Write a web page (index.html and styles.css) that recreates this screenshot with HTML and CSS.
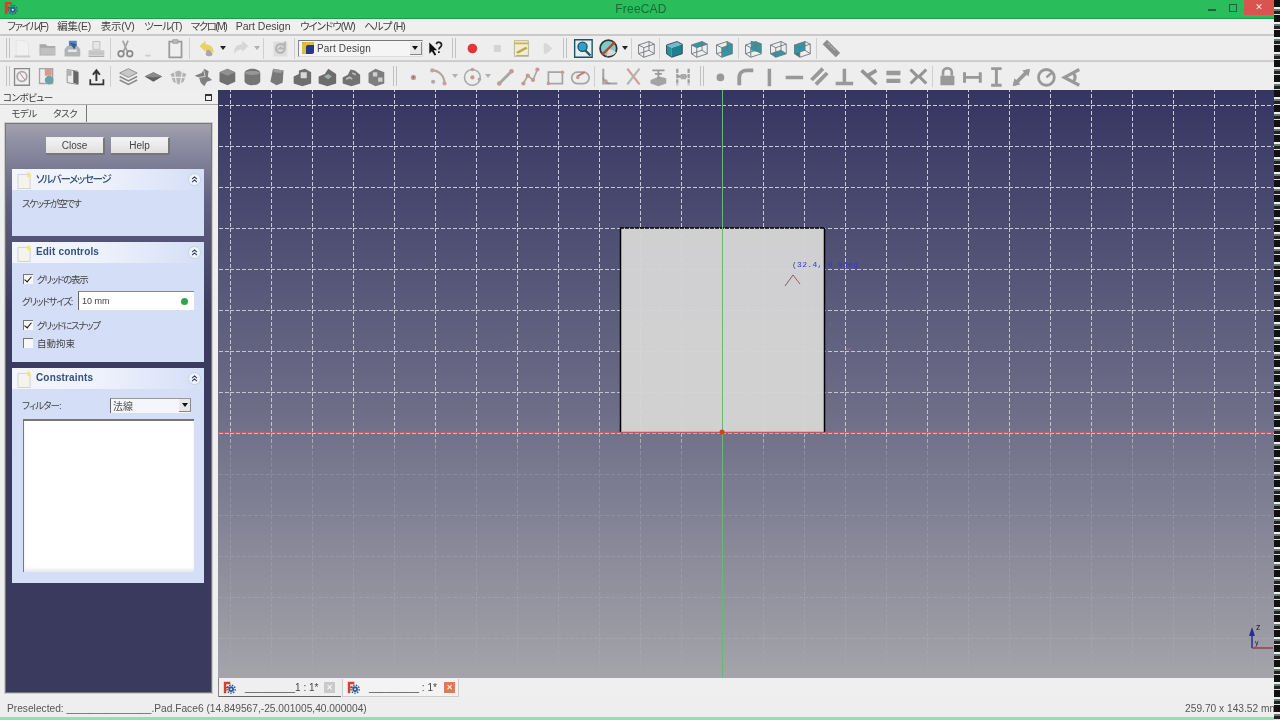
FILE: index.html
```html
<!DOCTYPE html>
<html lang="ja">
<head>
<meta charset="utf-8">
<title>FreeCAD</title>
<link rel="stylesheet" href="styles.css">
</head>
<body>
<svg class="defs" width="0" height="0">
  <defs>
    <symbol id="new" viewBox="0 0 24 24"><path d="M5 3h10l4 4v15H5z" fill="#f1f1f1" stroke="#e2e2e2"/><path d="M3 21h18" stroke="#ccc" stroke-width="2"/></symbol>
    <symbol id="open" viewBox="0 0 24 24"><path d="M3 7h7l2 2h9v11H3z" fill="#a8a8a8"/><path d="M4 11h17v8H4z" fill="#c0c0c0"/></symbol>
    <symbol id="save" viewBox="0 0 24 24"><path d="M8 3h9v9H8z" fill="#5a86b8"/><path d="M3 13l3-4h12l3 4v8H3z" fill="#b3b3b3"/><path d="M7 13h10v3H7z" fill="#e8e8e8"/><path d="M9 5l5 8 3-6z" fill="#2f5f96"/></symbol>
    <symbol id="print" viewBox="0 0 24 24"><path d="M8 4h8v9H8z" fill="#e6e6e6" stroke="#bbb"/><path d="M3 14h18v6H3z" fill="#c6c6c6"/><path d="M3 21h18" stroke="#999"/></symbol>
    <symbol id="cut" viewBox="0 0 24 24"><path d="M9 3l5 12M15 3l-5 12" stroke="#a5a5a5" stroke-width="2" fill="none"/><circle cx="7" cy="18" r="3.2" fill="none" stroke="#8a8a8a" stroke-width="2"/><circle cx="17" cy="18" r="3.2" fill="none" stroke="#8a8a8a" stroke-width="2"/></symbol>
    <symbol id="copy" viewBox="0 0 24 24"><path d="M6 15h8v6H6z" fill="#ececec"/><path d="M6 20h6" stroke="#ccc" stroke-width="2"/></symbol>
    <symbol id="paste" viewBox="0 0 24 24"><path d="M5 4h14v18H5z" fill="#eee" stroke="#9a9a9a" stroke-width="2"/><path d="M9 2h6v4H9z" fill="#bbb" stroke="#999"/></symbol>
    <symbol id="undo" viewBox="0 0 24 24"><path d="M3 9l7-6v4c6 0 10 4 9 11-2-4-5-5-9-5v3z" fill="#ecd060"/><path d="M11 13c4 0 6 2 7 6-3 3-6 2-8 0z" fill="#a8a8a8"/></symbol>
    <symbol id="redo" viewBox="0 0 24 24"><path d="M21 9l-7-6v4C8 7 4 11 5 18c2-4 5-5 9-5v3z" fill="#d6d6d6"/></symbol>
    <symbol id="refresh" viewBox="0 0 24 24"><path d="M4 4h16v17H4z" fill="#dedede"/><path d="M17 12a5 5 0 1 1-2-4l2-2v6h-6l2-2" fill="none" stroke="#b5b5b5" stroke-width="2.4"/></symbol>
    <symbol id="help" viewBox="0 0 24 24"><path d="M5 5v13l3-3 3 5 2-1-3-5h4z" fill="#111"/><path d="M13 7c1-3 6-3 6 1 0 3-3 2-3 5M16 15v2" fill="none" stroke="#222" stroke-width="2"/></symbol>
    <symbol id="rec" viewBox="0 0 24 24"><circle cx="12" cy="12" r="5.5" fill="#e5343a"/></symbol>
    <symbol id="stop" viewBox="0 0 24 24"><path d="M8 8h8v8H8z" fill="#d4d4d4"/></symbol>
    <symbol id="macro" viewBox="0 0 24 24"><path d="M4 3h16v18H4z" fill="#f1ecd2" stroke="#b5b08e"/><path d="M4 6h16" stroke="#c7b64d" stroke-width="2"/><path d="M6 16l11-6 2 2-11 6z" fill="#b9a94a"/><path d="M6 20h14" stroke="#a5a5a5"/></symbol>
    <symbol id="play" viewBox="0 0 24 24"><path d="M9 6v12h3l7-6-7-6z" fill="#d8d8d8"/></symbol>
    <symbol id="fit" viewBox="0 0 24 24"><path d="M2 2h20v20H2z" fill="#e4eef0" stroke="#1d5260" stroke-width="1.6"/><circle cx="11" cy="10" r="5.2" fill="#2f9fcb" stroke="#1d5260" stroke-width="1.5"/><path d="M14 14l6 6" stroke="#1d5260" stroke-width="2.6"/></symbol>
    <symbol id="draw" viewBox="0 0 24 24"><circle cx="12" cy="12" r="9.5" fill="#79cfc5" stroke="#333" stroke-width="2"/><path d="M12 12l9 4-3 3-8 2z" fill="#d9d9d9"/><path d="M5 19L19 5" stroke="#d8342d" stroke-width="2.6"/></symbol>
    <symbol id="cube" viewBox="0 0 24 24"><path d="M3 8l12-4 6 3v11l-12 4-6-4z M3 8l6 3v11 M9 11l12-4 M3 18l12-4V4 M15 14l6 4" fill="none" stroke="#6c7579" stroke-width="1"/></symbol>
    <symbol id="c-front" viewBox="0 0 24 24"><path d="M3 8l6 3v11l-6-4z" fill="#2a8f9f"/><path d="M9 11l12-4v11l-12 4z" fill="#1f7f90"/><path d="M3 8l12-4 6 3-12 4z" fill="#6fbcc8"/><path d="M3 8l12-4 6 3v11l-12 4-6-4z" fill="none" stroke="#345" stroke-width="1"/></symbol>
    <symbol id="c-top" viewBox="0 0 24 24"><path d="M3 8l12-4 6 3-12 4z" fill="#2f98a8"/><use href="#cube"/></symbol>
    <symbol id="c-right" viewBox="0 0 24 24"><path d="M15 4l6 3v11l-6-4z" fill="#3aa1ad"/><path d="M9 11l12-4v11l-12 4z" fill="#2f98a8"/><use href="#cube"/></symbol>
    <symbol id="c-rear" viewBox="0 0 24 24"><path d="M9 3l12 3v11l-12-3z" fill="#2f98a8"/><use href="#cube"/></symbol>
    <symbol id="c-bottom" viewBox="0 0 24 24"><path d="M3 18l12-4 6 4-12 4z" fill="#2f98a8"/><use href="#cube"/></symbol>
    <symbol id="c-left" viewBox="0 0 24 24"><path d="M3 8l6 3v11l-6-4z" fill="#1f7f90"/><path d="M3 8l12-4v10L3 18z" fill="#2f98a8"/><use href="#cube"/></symbol>
    <symbol id="measure" viewBox="0 0 24 24"><path d="M7 2l15 15-5 5L2 7z" fill="#8d8d8d"/><path d="M8 6l2 2M11 9l2 2M14 12l2 2" stroke="#ddd"/></symbol>

    <symbol id="s1" viewBox="0 0 24 24"><path d="M3 3h17v19H3z" fill="#f0f0f0" stroke="#888" stroke-width="1.5"/><circle cx="11.5" cy="12" r="5.5" fill="none" stroke="#aaa" stroke-width="2"/><path d="M9 8l6 8" stroke="#c68" /></symbol>
    <symbol id="s2" viewBox="0 0 24 24"><path d="M3 3h15v17H3z" fill="#eee" stroke="#a5a5a5" stroke-width="1.5"/><path d="M9 3h8v8H9z" fill="#d79a8c"/><circle cx="14" cy="16" r="5" fill="#6aa2a8"/></symbol>
    <symbol id="s3" viewBox="0 0 24 24"><path d="M6 4l12 2v15L6 19z" fill="#ececec" stroke="#888"/><path d="M13 5l6 2v14l-6-2z" fill="#666"/><path d="M6 5h5v6H6z" fill="#b0b0b0"/></symbol>
    <symbol id="s4" viewBox="0 0 24 24"><path d="M5 15v6h15v-6" fill="none" stroke="#333" stroke-width="2"/><path d="M12 17V6M8 10l4-5 4 5" fill="none" stroke="#333" stroke-width="2.2"/></symbol>
    <symbol id="s5" viewBox="0 0 24 24"><path d="M2 8l10-5 10 5-10 5z" fill="#c8c8c8" stroke="#888"/><path d="M2 12l10 5 10-5M2 16l10 5 10-5" fill="none" stroke="#888" stroke-width="1.6"/></symbol>
    <symbol id="s6" viewBox="0 0 24 24"><path d="M2 12l10-5 10 5-10 6z" fill="#5f5f5f"/><path d="M2 12l10-5 10 5-10 1z" fill="#8a8a8a"/></symbol>
    <symbol id="s7" viewBox="0 0 24 24"><path d="M3 9l9-4 9 4-3 9-6 3-6-3z" fill="#b2b2b2"/><path d="M7 4l3 17M17 4l-3 17M3 13h18" stroke="#e8e8e8" stroke-width="1.5"/></symbol>
    <symbol id="s8" viewBox="0 0 24 24"><path d="M2 11l8-3 3-5 5 3-1 6 5 4-6 2-3 5-4-4-2-6z" fill="#808080"/><path d="M12 3l2 9-7 1" stroke="#ddd" fill="none"/></symbol>
    <symbol id="s9" viewBox="0 0 24 24"><path d="M3 7l9-4 9 4v11l-9 4-9-4z" fill="#707070"/><path d="M3 7l9-4 9 4-9 4z" fill="#909090"/></symbol>
    <symbol id="s10" viewBox="0 0 24 24"><path d="M3 8c0-3 5-5 9-5s9 2 9 5v9c0 3-5 5-9 5s-9-2-9-5z" fill="#757575"/><path d="M3 8c2-3 16-3 18 0-2 3-16 3-18 0z" fill="#969696"/></symbol>
    <symbol id="s11" viewBox="0 0 24 24"><path d="M7 3l12 2-1 14-7 3-7-4z" fill="#787878"/><path d="M7 3l12 2-3 3-8-1z" fill="#9c9c9c"/></symbol>
    <symbol id="s12" viewBox="0 0 24 24"><path d="M2 12l6-3V5l7-2 7 4v13l-10 3-10-3z" fill="#6e6e6e"/><path d="M10 7h7v7h-7z" fill="#d8d8d8"/></symbol>
    <symbol id="s13" viewBox="0 0 24 24"><path d="M2 12l7-3 4-6 9 6v11l-10 3-10-3z" fill="#6c6c6c"/><path d="M8 12l5-3 4 3-4 3z" fill="#9fb0ac"/></symbol>
    <symbol id="s14" viewBox="0 0 24 24"><path d="M2 13l6-3 3-6 5 1 6 5v10l-10 3-10-3z" fill="#727272"/><path d="M6 15l4-2 3 2M13 8l4 2" stroke="#bbb" stroke-width="2" fill="none"/></symbol>
    <symbol id="s15" viewBox="0 0 24 24"><path d="M3 8l8-5 10 4v13l-10 3-8-4z" fill="#7e7e7e"/><path d="M8 7h5v5H8zM14 13h5v5h-5z" fill="#cfcfcf"/></symbol>

    <symbol id="pt" viewBox="0 0 24 24"><circle cx="12" cy="13" r="3" fill="#b9a3a0"/><circle cx="12" cy="13" r="1.2" fill="#c0524a"/></symbol>
    <symbol id="arc" viewBox="0 0 24 24"><path d="M5 5c8 0 14 7 14 15" fill="none" stroke="#b0a6a2" stroke-width="2.4"/><circle cx="5" cy="5" r="2.4" fill="#c9a096"/><circle cx="19" cy="20" r="2.4" fill="#c9a096"/><circle cx="6" cy="18" r="2.4" fill="#b5a8a4"/></symbol>
    <symbol id="circ" viewBox="0 0 24 24"><circle cx="12" cy="13" r="9" fill="none" stroke="#a9a9a9" stroke-width="1.8"/><circle cx="12" cy="13" r="2.4" fill="#c39b92"/><circle cx="12" cy="4" r="2" fill="#c39b92"/><circle cx="20" cy="15" r="2" fill="#b5a8a4"/></symbol>
    <symbol id="line" viewBox="0 0 24 24"><path d="M5 20L19 6" stroke="#a8a8a8" stroke-width="3.4"/><circle cx="5" cy="20" r="2.6" fill="#c39b92"/><circle cx="19" cy="6" r="2.6" fill="#c39b92"/></symbol>
    <symbol id="poly" viewBox="0 0 24 24"><path d="M4 20l5-9 6 5 5-12" fill="none" stroke="#aaa" stroke-width="2"/><g fill="#c39b92"><circle cx="4" cy="20" r="2.4"/><circle cx="9" cy="11" r="2.4"/><circle cx="15" cy="16" r="2.4"/><circle cx="20" cy="4" r="2.4"/></g></symbol>
    <symbol id="rect" viewBox="0 0 24 24"><path d="M4 7h16v13H4z" fill="none" stroke="#a5a5a5" stroke-width="2"/><circle cx="20" cy="7" r="2" fill="#c39b92"/><circle cx="4" cy="20" r="2" fill="#c39b92"/></symbol>
    <symbol id="slot" viewBox="0 0 24 24"><rect x="2" y="7" width="20" height="13" rx="6.5" fill="#eee" stroke="#a5a5a5" stroke-width="2"/><path d="M8 12l9-5" stroke="#c07a70" stroke-width="2"/><circle cx="9" cy="13" r="2" fill="#c39b92"/></symbol>
    <symbol id="fillet" viewBox="0 0 24 24"><path d="M5 3v17h16" fill="none" stroke="#a5a5a5" stroke-width="2.4"/><path d="M5 13c0 4 4 7 8 7" fill="none" stroke="#888" stroke-width="1.4"/><circle cx="8" cy="17" r="2" fill="#c39b92"/></symbol>
    <symbol id="trim" viewBox="0 0 24 24"><path d="M5 3l14 18" stroke="#cf9e97" stroke-width="2.6"/><path d="M19 3L5 21" stroke="#b5b5b5" stroke-width="2.6"/></symbol>
    <symbol id="ext" viewBox="0 0 24 24"><path d="M3 16l10-4 8 2v6l-9 3-9-3z" fill="#a4a4a4"/><path d="M5 5h14M12 5v10M8 9h8" stroke="#999" stroke-width="2"/></symbol>
    <symbol id="cons" viewBox="0 0 24 24"><path d="M5 3v19M18 3v19M5 12h13" stroke="#a0a0a0" stroke-width="2.6" fill="none" stroke-dasharray="5 1"/><path d="M9 9h6v6H9z" fill="#aaa"/></symbol>
    <symbol id="k1" viewBox="0 0 24 24"><circle cx="12" cy="13" r="4.4" fill="#999"/></symbol>
    <symbol id="k2" viewBox="0 0 24 24"><path d="M5 22V13c0-5 4-8 9-8h7" fill="none" stroke="#999" stroke-width="4.4"/></symbol>
    <symbol id="k3" viewBox="0 0 24 24"><path d="M12 3v20" stroke="#999" stroke-width="4"/></symbol>
    <symbol id="k4" viewBox="0 0 24 24"><path d="M2 13h20" stroke="#999" stroke-width="4"/></symbol>
    <symbol id="k5" viewBox="0 0 24 24"><path d="M3 16L16 3M8 21L21 8" stroke="#999" stroke-width="4.4"/></symbol>
    <symbol id="k6" viewBox="0 0 24 24"><path d="M12 3v17M2 20h20" stroke="#999" stroke-width="4" fill="none"/></symbol>
    <symbol id="k7" viewBox="0 0 24 24"><path d="M3 5l15 14M10 11l10-6M14 15l6 6" stroke="#949494" stroke-width="4" fill="none"/></symbol>
    <symbol id="k8" viewBox="0 0 24 24"><path d="M4 8h16M4 17h16" stroke="#999" stroke-width="5"/></symbol>
    <symbol id="k9" viewBox="0 0 24 24"><path d="M3 4l8 8-8 8M21 4l-8 8 8 8" stroke="#949494" stroke-width="3.6" fill="none"/></symbol>
    <symbol id="lock" viewBox="0 0 24 24"><path d="M4 11h16v11H4z" fill="#999"/><path d="M7 11V7c0-6 10-6 10 0v4" fill="none" stroke="#999" stroke-width="3"/></symbol>
    <symbol id="hd" viewBox="0 0 24 24"><path d="M3 7v12M21 7v12M3 13h18" stroke="#999" stroke-width="3.4" fill="none"/></symbol>
    <symbol id="vd" viewBox="0 0 24 24"><path d="M6 3h12M6 22h12M12 3v19" stroke="#999" stroke-width="3.4" fill="none"/></symbol>
    <symbol id="dd" viewBox="0 0 24 24"><path d="M4 21L20 5" stroke="#999" stroke-width="4.2"/><path d="M22 3l-9 2 7 7zM2 23l9-2-7-7z" fill="#999"/></symbol>
    <symbol id="rad" viewBox="0 0 24 24"><circle cx="12" cy="13" r="9" fill="none" stroke="#999" stroke-width="3.2"/><path d="M12 13l7-6" stroke="#999" stroke-width="3"/></symbol>
    <symbol id="ang" viewBox="0 0 24 24"><path d="M21 4L4 13l17 9M14 8c3 3 3 7 0 10" fill="none" stroke="#999" stroke-width="3.6"/></symbol>
    <symbol id="logo" viewBox="0 0 16 16"><path d="M1 1h8v3H4v3h4v2H4v6H1z" fill="#d8402c"/><circle cx="10" cy="10" r="3.4" fill="#2f5d95"/><circle cx="10" cy="10" r="5" fill="none" stroke="#2f5d95" stroke-width="1.6" stroke-dasharray="2 1.4"/><circle cx="10" cy="10" r="1.2" fill="#eee"/></symbol>
    <symbol id="note" viewBox="0 0 16 18"><path d="M1 2h13v15H1z" fill="#f4f3ec" stroke="#cfcfcf"/><path d="M11 0h3v5h-3z" fill="#f7ea5a"/></symbol>
    <symbol id="chev" viewBox="0 0 14 14"><circle cx="7" cy="7" r="6.5" fill="#eef2fb" stroke="#c5cde0"/><path d="M4.4 6.6L7 4.2l2.6 2.4M4.4 9.8L7 7.4l2.6 2.4" fill="none" stroke="#2b3556" stroke-width="1.1"/></symbol>
    <pattern id="grid" width="41" height="41" patternUnits="userSpaceOnUse" patternTransform="translate(12 15)">
      <path d="M0 0V41" stroke="#fff" stroke-width="2" stroke-dasharray="4 2" fill="none"/>
      <path d="M0 0H41" stroke="#fff" stroke-width="2" stroke-dasharray="4 2" fill="none"/>
    </pattern>
    <linearGradient id="fade" x1="0" y1="0" x2="0" y2="1">
      <stop offset="0" stop-color="#fff" stop-opacity=".75"/>
      <stop offset=".58" stop-color="#fff" stop-opacity=".6"/>
      <stop offset=".62" stop-color="#fff" stop-opacity=".14"/>
      <stop offset=".95" stop-color="#fff" stop-opacity=".08"/>
      <stop offset="1" stop-color="#fff" stop-opacity="0"/>
    </linearGradient>
    <mask id="fademask"><rect width="1056" height="588" fill="url(#fade)"/></mask>
  </defs>
</svg>

<div class="app">
  <div class="win">
    <header class="titlebar">
      <svg class="applogo"><use href="#logo"/></svg>
      <span class="apptitle">FreeCAD</span>
      <div class="winctl">
        <span class="wmin"></span>
        <span class="wres"></span>
        <span class="wclose">✕</span>
      </div>
    </header>

    <nav class="menubar">
      <span class="m1">ファイル(F)</span><span class="kj">編集(E)</span><span class="kj">表示(V)</span><span>ツール(T)</span><span class="m5">マクロ(M)</span><span class="lat">Part Design</span><span>ウインドウ(W)</span><span>ヘルプ (H)</span>
    </nav>

    <div class="toolbar tb1">
      <i class="grip"></i>
      <svg class="ic"><use href="#new"/></svg>
      <svg class="ic"><use href="#open"/></svg>
      <svg class="ic"><use href="#save"/></svg>
      <svg class="ic"><use href="#print"/></svg>
      <i class="sep"></i>
      <svg class="ic"><use href="#cut"/></svg>
      <svg class="ic"><use href="#copy"/></svg>
      <svg class="ic"><use href="#paste"/></svg>
      <i class="sep mr3"></i>
      <svg class="ic"><use href="#undo"/></svg>
      <i class="dd"></i>
      <svg class="ic"><use href="#redo"/></svg>
      <i class="dd off"></i>
      <i class="sep w6"></i>
      <svg class="ic"><use href="#refresh"/></svg>
      <i class="sep"></i>
      <div class="wb">
        <span class="wbicon"></span>
        <span class="wbtext">Part Design</span>
        <span class="cbtn"></span>
      </div>
      <svg class="ic"><use href="#help"/></svg>
      <i class="grip gm"></i>
      <svg class="ic"><use href="#rec"/></svg>
      <svg class="ic"><use href="#stop"/></svg>
      <svg class="ic"><use href="#macro"/></svg>
      <svg class="ic"><use href="#play"/></svg>
      <i class="grip gm"></i>
      <svg class="ic"><use href="#fit"/></svg>
      <svg class="ic"><use href="#draw"/></svg>
      <i class="dd"></i>
      <i class="sep"></i>
      <svg class="ic"><use href="#cube"/></svg>
      <i class="sep"></i>
      <svg class="ic"><use href="#c-front"/></svg>
      <svg class="ic"><use href="#c-top"/></svg>
      <svg class="ic"><use href="#c-right"/></svg>
      <i class="sep"></i>
      <svg class="ic"><use href="#c-rear"/></svg>
      <svg class="ic"><use href="#c-bottom"/></svg>
      <svg class="ic"><use href="#c-left"/></svg>
      <i class="sep"></i>
      <svg class="ic"><use href="#measure"/></svg>
    </div>

    <div class="toolbar tb2">
      <i class="grip"></i>
      <svg class="ic"><use href="#s1"/></svg>
      <svg class="ic"><use href="#s2"/></svg>
      <svg class="ic"><use href="#s3"/></svg>
      <svg class="ic"><use href="#s4"/></svg>
      <i class="sep mr3"></i>
      <svg class="ic"><use href="#s5"/></svg>
      <svg class="ic"><use href="#s6"/></svg>
      <svg class="ic"><use href="#s7"/></svg>
      <svg class="ic"><use href="#s8"/></svg>
      <svg class="ic"><use href="#s9"/></svg>
      <svg class="ic"><use href="#s10"/></svg>
      <svg class="ic"><use href="#s11"/></svg>
      <svg class="ic"><use href="#s12"/></svg>
      <svg class="ic"><use href="#s13"/></svg>
      <svg class="ic"><use href="#s14"/></svg>
      <svg class="ic"><use href="#s15"/></svg>
      <i class="grip gm"></i>
      <svg class="ic"><use href="#pt"/></svg>
      <svg class="ic"><use href="#arc"/></svg>
      <i class="dd off"></i>
      <svg class="ic"><use href="#circ"/></svg>
      <i class="dd off"></i>
      <svg class="ic"><use href="#line"/></svg>
      <svg class="ic"><use href="#poly"/></svg>
      <svg class="ic"><use href="#rect"/></svg>
      <svg class="ic"><use href="#slot"/></svg>
      <i class="sep"></i>
      <svg class="ic"><use href="#fillet"/></svg>
      <svg class="ic"><use href="#trim"/></svg>
      <svg class="ic"><use href="#ext"/></svg>
      <svg class="ic"><use href="#cons"/></svg>
      <i class="grip gm"></i>
      <svg class="ic"><use href="#k1"/></svg>
      <svg class="ic"><use href="#k2"/></svg>
      <svg class="ic"><use href="#k3"/></svg>
      <svg class="ic"><use href="#k4"/></svg>
      <svg class="ic"><use href="#k5"/></svg>
      <svg class="ic"><use href="#k6"/></svg>
      <svg class="ic"><use href="#k7"/></svg>
      <svg class="ic"><use href="#k8"/></svg>
      <svg class="ic"><use href="#k9"/></svg>
      <i class="sep"></i>
      <svg class="ic"><use href="#lock"/></svg>
      <svg class="ic"><use href="#hd"/></svg>
      <svg class="ic"><use href="#vd"/></svg>
      <svg class="ic"><use href="#dd"/></svg>
      <svg class="ic"><use href="#rad"/></svg>
      <svg class="ic"><use href="#ang"/></svg>
    </div>

    <div class="main">
      <aside class="dock">
        <div class="dockhead">
          <span>コンボビュー</span>
          <span class="floatbtn"></span>
        </div>
        <div class="tabs">
          <span class="tab">モデル</span>
          <span class="tab tabon">タスク</span>
        </div>
        <div class="panel">
          <div class="btnrow">
            <span class="btn">Close</span>
            <span class="btn">Help</span>
          </div>

          <section class="sec sec1">
            <div class="sechead">
              <svg class="note"><use href="#note"/></svg>
              <span class="sectitle jp">ソルバーメッセージ</span>
              <svg class="chev"><use href="#chev"/></svg>
            </div>
            <div class="secbody">
              <p class="msg">スケッチが空です</p>
            </div>
          </section>

          <section class="sec sec2">
            <div class="sechead">
              <svg class="note"><use href="#note"/></svg>
              <span class="sectitle">Edit controls</span>
              <svg class="chev"><use href="#chev"/></svg>
            </div>
            <div class="secbody form">
              <label class="row r1"><i class="cb on"></i>グリッドの表示</label>
              <div class="row r2">
                <span class="lab">グリッドサイズ:</span>
                <span class="field">10 mm<i class="ok"></i></span>
              </div>
              <label class="row r3"><i class="cb on"></i>グリッドにスナップ</label>
              <label class="row r4"><i class="cb"></i>自動拘束</label>
            </div>
          </section>

          <section class="sec sec3">
            <div class="sechead">
              <svg class="note"><use href="#note"/></svg>
              <span class="sectitle">Constraints</span>
              <svg class="chev"><use href="#chev"/></svg>
            </div>
            <div class="secbody filt">
              <div class="filtrow">
                <span class="lab">フィルター:</span>
                <span class="combo">法線<span class="cbtn"></span></span>
              </div>
              <div class="listbox"></div>
            </div>
          </section>
        </div>
      </aside>

      <div class="center">
        <div class="view">
          <svg class="canvas" width="1056" height="588">
            <rect width="1056" height="588" fill="url(#grid)" mask="url(#fademask)"/>
            <rect x="402" y="138" width="205" height="204" fill="#d5d5d5" opacity=".96"/>
            <path d="M402.500 138V342M606.500 138V342" stroke="#000" stroke-width="1.500"/>
            <path d="M402 138H607" stroke="#000" stroke-width="1.500" stroke-dasharray="4 1"/>
            <path d="M0 342.500H1056" stroke="#c65f64" stroke-width="1"/>
            <path d="M402 342.500H607" stroke="#c2585c" stroke-width="1.500"/>
            <path d="M504.500 0V588" stroke="#6db67a" stroke-width="1"/>
            <circle cx="504" cy="342" r="2.500" fill="#e8361c"/>
            <path d="M575 185l7 9" fill="none" stroke="#c8465c" stroke-width="1"/>
            <path d="M567 196l8-11" fill="none" stroke="#77606a" stroke-width="1"/>
            <text class="ann" x="574" y="177">(32.4, 0.0deg</text>
            <path d="M612 234h1M628 259h5" stroke="#94707c" stroke-width="1"/>
            <g fill="none" stroke-width="1.500">
              <path d="M1034 558V543" stroke="#2c2c90"/>
              <path d="M1034 558h21" stroke="#9a3a52"/>
            </g>
            <path d="M1034 537l-3 9h6z" fill="#2c2c90"/>
            <text class="axis" x="1038" y="540">z</text>
            <text class="axis small" x="1037" y="555">y</text>
          </svg>
        </div>
        <div class="doctabs">
          <div class="dtab">
            <svg class="dlogo"><use href="#logo"/></svg>
            <span class="dname">_________<span class="dsuf">1 : 1*</span></span>
            <span class="dclose">✕</span>
          </div>
          <div class="dtab active">
            <svg class="dlogo"><use href="#logo"/></svg>
            <span class="dname">_________<span class="dsuf"> : 1*</span></span>
            <span class="dclose hot">✕</span>
          </div>
        </div>
      </div>
    </div>

    <footer class="status">
      <span class="stl">Preselected: _______________.Pad.Face6 (14.849567,-25.001005,40.000004)</span>
      <span class="str">259.70 x 143.52 mm</span>
    </footer>
    <div class="greenline"></div>
  </div>
  <div class="strip"></div>
</div>
</body>
</html>
```
FILE: styles.css
```css
* { box-sizing: border-box; }
html, body { margin: 0; height: 100%; overflow: hidden; background: #eee; }
body {
  font-family: "Liberation Sans", "Noto Sans CJK JP", sans-serif;
  font-size: 11px;
  font-feature-settings: "palt";
  color: #333;
  filter: blur(.4px);
}
i { font-style: normal; display: block; flex: none; }
.defs { position: absolute; }

.app { display: flex; width: 1280px; height: 720px; }
.win { width: 1274px; height: 720px; display: flex; flex-direction: column; }
.strip {
  width: 6px;
  background: repeating-linear-gradient(180deg, #111 0 7px, #eee 7px 9px, #6a7a70 9px 11px, #222 11px 14px, #ddd 14px 15px);
}

.titlebar {
  height: 19px; flex: none; display: flex; align-items: flex-start;
  background: #29bd5b; border-bottom: 1px solid #1d9c4a; position: relative;
}
.applogo { width: 14px; height: 14px; margin: 1px 0 0 4px; }
.apptitle {
  position: absolute; left: 0; right: -8px; top: 2px; text-align: center;
  font-size: 12px; color: #186b3a; letter-spacing: .2px;
}
.winctl { margin-left: auto; display: flex; height: 15px; align-items: flex-start; }
.wmin { width: 8px; height: 2px; background: #235f3c; margin: 9px 13px 0 0; }
.wres { width: 8px; height: 8px; border: 1px solid #235f3c; margin: 4px 7px 0 0; box-shadow: 1px -1px 0 #5b9c75; }
.wclose {
  width: 30px; height: 15px; background: #d9534f; color: #f5eaea; text-align: center;
  font-size: 9px; line-height: 15px; font-family: "DejaVu Sans", sans-serif;
}

.menubar {
  height: 15px; flex: none; display: flex; gap: 9.5px; padding-left: 7px;
  background: #f0f0f0; color: #444; font-size: 10.5px; line-height: 15px; white-space: nowrap;
  letter-spacing: -1px;
}
.menubar .lat { letter-spacing: 0; }
.menubar .kj { letter-spacing: -.2px; }
.menubar .m1 { letter-spacing: -1.3px; }
.menubar .m5 { letter-spacing: -1.6px; }

.toolbar { flex: none; display: flex; align-items: center; background: #eeeeee; }
.tb1 { height: 27px; border-top: 2px solid #c9c9c9; border-bottom: 1px solid #d0d0d0; padding-left: 6px; }
.tb2 { height: 29px; border-top: 1px solid #cbcbcb; padding-left: 6px; }
.ic { width: 24.8px; height: 21px; flex: none; padding: 0; }
.grip { width: 4px; height: 20px; margin: 0; border-left: 1px solid #c2c2c2; border-right: 1px solid #c2c2c2; }
.gm { margin: 0 4px; }
.sep { width: 4px; height: 21px; background: linear-gradient(90deg, transparent 1px, #cfcfcf 1px, #cfcfcf 2px, transparent 2px); }
.mr3 { margin-right: 3px; }
.w6 { width: 6px; }
.dd { width: 9px; height: 5px; position: relative; }
.dd::after {
  content: ""; position: absolute; left: 1px; top: 0;
  border-left: 3.500px solid transparent; border-right: 3.500px solid transparent; border-top: 4px solid #222;
}
.dd.off::after { border-top-color: #b0b0b0; }

.wb {
  width: 125px; height: 17px; margin-left: 1px; display: flex; align-items: center; flex: none;
  background: #f5f5f5; border: 1px solid; border-color: #777 #ddd #ddd #888; padding-left: 3px;
}
.wbicon { width: 12px; height: 12px; background: #27378e; border-radius: 2px; box-shadow: inset 4px 3px 0 #d9c13c; flex: none; }
.wbtext { margin-left: 3px; font-size: 10px; color: #444; letter-spacing: .15px; }
.cbtn {
  margin-left: auto; width: 12px; height: 13px; flex: none; position: relative;
  border-right: 1px solid #888; border-bottom: 1px solid #888; background: #e8e8e8;
}
.cbtn::after {
  content: ""; position: absolute; left: 2.500px; top: 4px;
  border-left: 3.500px solid transparent; border-right: 3.500px solid transparent; border-top: 4px solid #111;
}

.main { height: 607px; flex: none; display: flex; min-height: 0; }
.dock { width: 218px; flex: none; display: flex; flex-direction: column; background: #efefef; }
.dockhead {
  height: 15px; flex: none; display: flex; align-items: center; justify-content: space-between;
  padding: 0 6px 0 3px; font-size: 9.500px; color: #333; border-bottom: 1px solid #aaa; letter-spacing: -.5px;
}
.floatbtn { width: 7px; height: 7px; border: 1px solid #333; border-top-width: 2px; }
.tabs { height: 18px; flex: none; display: flex; padding-left: 4px; margin-right: 5px; font-size: 9.500px; color: #444; letter-spacing: -.5px; }
.tab { width: 40px; text-align: center; line-height: 17px; }
.tabon { width: 43px; border-right: 1px solid #777; }

.panel {
  flex: 1; margin: 0 6px 4px 5px; padding: 13px 7px 0 6px;
  border: 1px solid #777; outline: 1px solid #ccc;
  background: linear-gradient(180deg, #a1a1ad 0, #8d8da3 20px, #5f5f80 80px, #3b3b60 190px, #393a5e 100%);
  display: flex; flex-direction: column; gap: 6px;
}
.btnrow { display: flex; gap: 6px; padding-left: 34px; height: 18px; margin-bottom: 8px; flex: none; }
.btn {
  width: 59px; height: 18px; background: linear-gradient(#f3f3f3, #e0e0e0);
  border-right: 2px solid #777; border-bottom: 2px solid #777; border-top: 1px solid #eee;
  text-align: center; font-size: 10px; line-height: 15px; color: #444;
}
.sec { background: #d4def6; flex: none; }
.sec1 { height: 67px; }
.sec2 { height: 120px; }
.sec3 { height: 215px; }
.sechead {
  height: 21px; display: flex; align-items: center; position: relative;
  background: linear-gradient(90deg, #f3f5fc 0, #eef2fb 45%, #d4def6 100%);
}
.note { width: 15px; height: 18px; margin: 2px 0 0 5px; flex: none; }
.sectitle { margin: 0 0 2px 4px; font-weight: 700; color: #33507f; font-size: 10px; letter-spacing: .15px; }
.sectitle.jp { font-weight: 500; font-size: 10.500px; letter-spacing: -1.3px; }
.chev { width: 13px; height: 13px; margin: 0 3px 0 auto; flex: none; }
.secbody { font-size: 9.500px; color: #444; letter-spacing: -1.3px; }
.msg { margin: 6px 0 0 10px; letter-spacing: -1.4px; }

.form { padding: 1px 0 0 11px; }
.row { display: flex; align-items: center; height: 20px; }
.cb {
  width: 10px; height: 10px; margin-right: 4px; background: #f8f8f8; position: relative;
  border-left: 1px solid #777; border-top: 1px solid #777;
}
.cb.on::after {
  content: ""; position: absolute; left: 2px; top: 0; width: 3px; height: 6px;
  border: solid #111; border-width: 0 1.500px 1.500px 0; transform: rotate(40deg);
}
.r1 { margin-top: 5px; height: 20px; }
.r2 { height: 23px; }
.r3 { height: 23px; padding-top: 2px; }
.r4 { height: 14px; margin-top: 1px; letter-spacing: 0; }
.lab { font-size: 9.500px; color: #444; white-space: nowrap; letter-spacing: -1.2px; }
.r2 .lab { margin-left: -1px; width: 56px; flex: none; }
.field {
  width: 116px; height: 19px; display: flex; align-items: center; padding-left: 3px; flex: none;
  background: #fff; border-left: 1px solid #666; border-top: 1px solid #888; font-size: 9px; letter-spacing: 0;
}
.ok { width: 7px; height: 7px; margin: 0 6px 0 auto; border-radius: 50%; background: #2fa44a; }

.filt { padding: 0 0 0 11px; }
.filtrow { display: flex; align-items: center; height: 16px; margin-top: 8px; }
.filtrow .lab { width: 88px; flex: none; margin-left: -1px; letter-spacing: -.9px; }
.combo {
  width: 81px; height: 15px; display: flex; align-items: center; padding-left: 2px; flex: none;
  background: #f4f6fb; border-left: 1px solid #666; border-top: 1px solid #999; font-size: 10px; color: #555; letter-spacing: 0;
}
.listbox {
  width: 171px; height: 153px; margin-top: 6px; background: #fff;
  border-left: 1px solid #777; border-top: 2px solid #777; box-shadow: inset 0 -3px 3px #e9ebf2;
}

.center { flex: 1; display: flex; flex-direction: column; min-width: 0; }
.view {
  height: 588px; flex: none; overflow: hidden;
  background: linear-gradient(180deg, #353562 0, #73738c 60%, #a4a4aa 100%);
}
.canvas { display: block; }
.ann { font: 8px "Liberation Mono", monospace; fill: #3737cf; letter-spacing: .3px; }
.axis { font: 9px "Liberation Sans", sans-serif; fill: #222; }
.axis.small { font-size: 7px; }

.doctabs { flex: 1; display: flex; align-items: flex-start; padding-top: 1px; background: #efefef; border-left: 1px solid #888; }
.dtab {
  height: 18px; width: 122px; display: flex; align-items: center; padding-left: 4px; flex: none;
  border-bottom: 1px solid #666;
}
.dtab.active { width: 117px; margin-left: 1px; border: 1px solid #ccc; border-top: none; background: #f3f3f3; }
.dlogo { width: 13px; height: 13px; flex: none; }
.dname { margin-left: 9px; font-size: 10px; color: #444; white-space: nowrap; width: 71px; flex: none; }
.active .dname { width: 66px; }
.dsuf { letter-spacing: 0; }
.dclose {
  width: 11px; height: 11px; background: #c9c9c9; color: #fff; font-size: 8px; line-height: 11px; text-align: center;
  flex: none; margin-left: 8px; font-family: "DejaVu Sans", sans-serif;
}
.dclose.hot { background: #dd7b52; margin-left: 9px; }

.status {
  height: 20px; flex: none; display: flex; align-items: center; justify-content: space-between;
  padding: 3px 0 0 7px; background: #eeeeee; font-size: 10.200px; color: #555; overflow: hidden; white-space: nowrap;
}
.str { margin-right: -4px; }
.greenline { height: 3px; flex: none; background: #9dd9b1; }
```
